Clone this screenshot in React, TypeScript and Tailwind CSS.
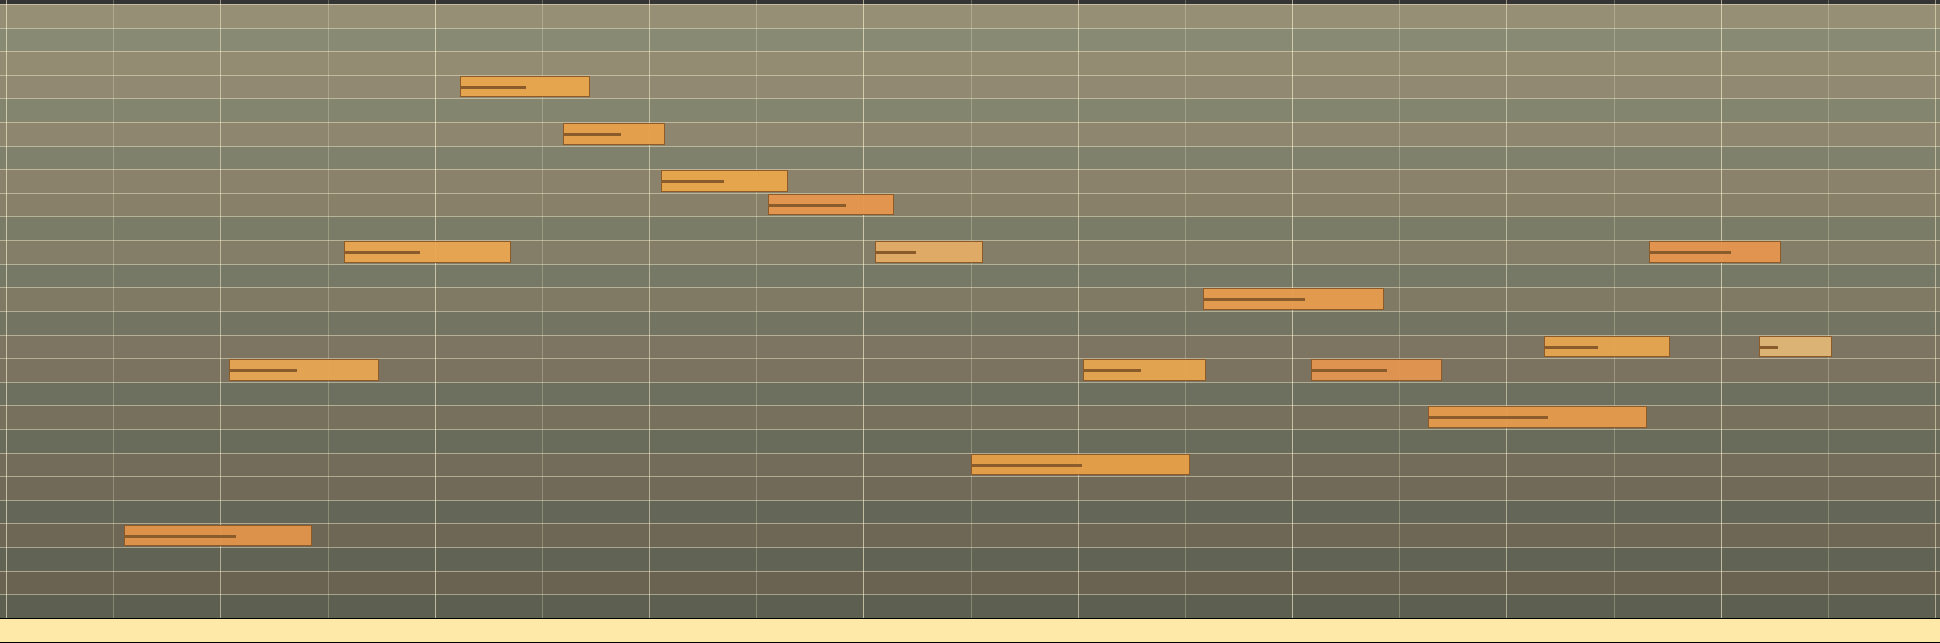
import React from 'react';

// piano roll: 26 semitone rows, G at the top
const ROWS = 26;
const GRID_H = 614;
const ROW_H = GRID_H / ROWS;
const BLACK_KEYS = [1, 4, 6, 9, 11, 13, 16, 18, 21, 23, 25];

type Note = { row: number; x1: number; x2: number; vel: number; fill: string };

const notes: Note[] = [
  { row: 3, x1: 460, x2: 590, vel: 525, fill: 'bg-[#eaa54c]/95' },
  { row: 5, x1: 563, x2: 665, vel: 620, fill: 'bg-[#e9a04b]/95' },
  { row: 7, x1: 661, x2: 788, vel: 723, fill: 'bg-[#e9a64c]/95' },
  { row: 8, x1: 768, x2: 894, vel: 845, fill: 'bg-[#e6964d]/95' },
  { row: 10, x1: 344, x2: 511, vel: 419, fill: 'bg-[#e9a751]/95' },
  { row: 10, x1: 875, x2: 983, vel: 915, fill: 'bg-[#e3ad66]/95' },
  { row: 10, x1: 1649, x2: 1781, vel: 1730, fill: 'bg-[#e6964e]/95' },
  { row: 12, x1: 1203, x2: 1384, vel: 1304, fill: 'bg-[#e79c4d]/95' },
  { row: 14, x1: 1544, x2: 1670, vel: 1597, fill: 'bg-[#e8a54f]/95' },
  { row: 14, x1: 1759, x2: 1832, vel: 1777, fill: 'bg-[#dfb676]/95' },
  { row: 15, x1: 229, x2: 379, vel: 296, fill: 'bg-[#e8a751]/95' },
  { row: 15, x1: 1083, x2: 1206, vel: 1140, fill: 'bg-[#e7a54f]/95' },
  { row: 15, x1: 1311, x2: 1442, vel: 1386, fill: 'bg-[#e5954f]/95' },
  { row: 17, x1: 1428, x2: 1647, vel: 1547, fill: 'bg-[#e69a4b]/95' },
  { row: 19, x1: 971, x2: 1190, vel: 1081, fill: 'bg-[#e7a047]/95' },
  { row: 22, x1: 124, x2: 312, vel: 235, fill: 'bg-[#e2954b]/95' },
];

const WHITE_TOP = [151, 143, 117];
const WHITE_BOTTOM = [104, 97, 81];
const BLACK_TOP = [138, 140, 116];
const BLACK_BOTTOM = [93, 96, 81];

function mix(a: number[], b: number[], t: number) {
  const c = a.map((v, i) => Math.round(v + (b[i] - v) * t));
  return `rgb(${c[0]}, ${c[1]}, ${c[2]})`;
}

function rowColor(row: number) {
  const t = row / (ROWS - 1);
  return BLACK_KEYS.includes(row)
    ? mix(BLACK_TOP, BLACK_BOTTOM, t)
    : mix(WHITE_TOP, WHITE_BOTTOM, t);
}

function lineTone(index: number) {
  if (index % 4 === 0) return 'border-[#fff6d4]/60';
  if (index % 2 === 0) return 'border-[#fff6d4]/50';
  return 'border-[#fff6d4]/25';
}

function NoteBlock({ note }: { note: Note }) {
  return (
    <div
      className={`absolute h-[21.5px] border border-[#8d5a28] ${note.fill}`}
      style={{ top: note.row * ROW_H + 1, left: note.x1, width: note.x2 - note.x1 }}
    >
      <div
        className="absolute left-[-1px] top-[9px] h-[3px] bg-[#8a5b2b]"
        style={{ width: note.vel - note.x1 + 1 }}
      />
    </div>
  );
}

export default function App() {
  return (
    <div className="flex h-[643px] w-full flex-col overflow-hidden bg-[#333333]">
      <div className="relative h-[618px]">
        <div className="h-[4px] bg-[#343434]" />
        <div className="flex h-[614px] flex-col">
          {Array.from({ length: ROWS }, (_, r) => (
            <div
              key={r}
              className="flex-1 border-t border-[#fff6d4]/45"
              style={{ backgroundColor: rowColor(r) }}
            />
          ))}
        </div>

        {/* beat / bar lines */}
        <div className="pointer-events-none absolute inset-0 flex pl-[6px]">
          {Array.from({ length: 19 }, (_, k) => (
            <div key={k} className={`h-full w-[107.18px] shrink-0 border-l ${lineTone(k)}`} />
          ))}
        </div>

        <div className="absolute inset-x-0 top-[4px] bottom-0">
          {notes.map((n, i) => (
            <NoteBlock key={i} note={n} />
          ))}
        </div>
      </div>

      <div className="h-[25px] border-y border-black bg-[#ffe9a8]" />
    </div>
  );
}
